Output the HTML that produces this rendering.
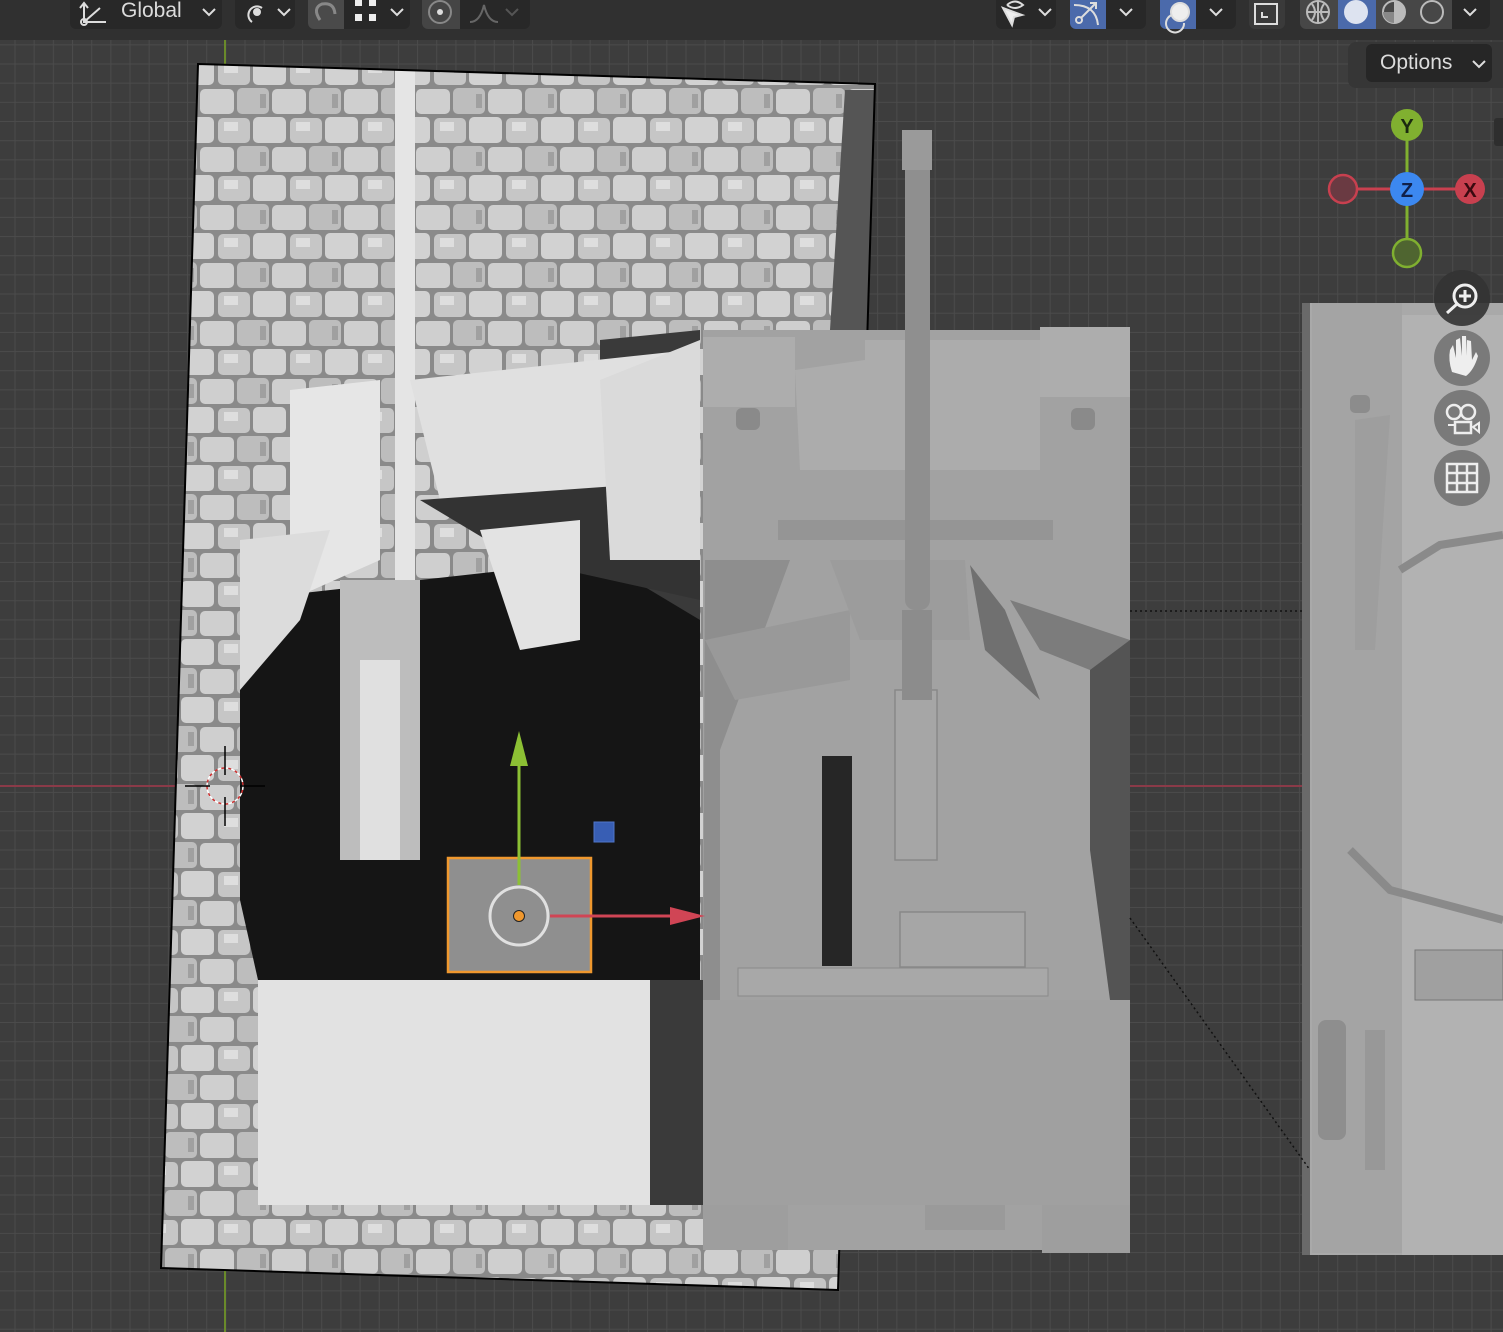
<!DOCTYPE html>
<html><head><meta charset="utf-8"><style>
html,body{margin:0;padding:0;width:1503px;height:1332px;overflow:hidden;background:#3d3d3d;font-family:"Liberation Sans",sans-serif}
.hdr{position:absolute;left:0;top:0;width:1503px;height:40px;background:#303030}
.btn{position:absolute;top:-6px;height:35px;background:#282828;border-radius:0 0 6px 6px}
.t{position:absolute;color:#dcdcdc;font-size:21px}
</style></head><body>
<svg width="1503" height="1332" style="position:absolute;left:0;top:0">
<defs>
<pattern id="g" width="19.17" height="19.17" patternUnits="userSpaceOnUse" x="14.5" y="6">
<rect width="19.17" height="19.17" fill="#3d3d3d"/>
<path d="M0 0H19.17M0 0V19.17" stroke="#4b4b4b" stroke-width="2"/>
</pattern>
<pattern id="cob" width="72" height="58" patternUnits="userSpaceOnUse">
<rect width="72" height="58" fill="#8a8a8a"/>
<rect x="2" y="2" width="32" height="25" rx="5" fill="#c6c6c6"/>
<rect x="37" y="1" width="33" height="26" rx="5" fill="#d2d2d2"/>
<rect x="-16" y="31" width="34" height="25" rx="5" fill="#cfcfcf"/>
<rect x="56" y="31" width="34" height="25" rx="5" fill="#cfcfcf"/>
<rect x="21" y="30" width="32" height="26" rx="5" fill="#bdbdbd"/>
<rect x="8" y="6" width="14" height="9" fill="#dedede"/>
<rect x="44" y="36" width="6" height="14" fill="#a0a0a0"/>
</pattern>
<clipPath id="ph"><polygon points="198,64 875,84 838,1290 161,1268"/></clipPath>
</defs>
<rect width="1503" height="1332" fill="url(#g)"/>
<line x1="0" y1="786" x2="1503" y2="786" stroke="#8a3a48" stroke-width="2"/>
<line x1="225" y1="40" x2="225" y2="1332" stroke="#6a8a2a" stroke-width="2"/>
<!-- photo -->
<g clip-path="url(#ph)">
<rect x="150" y="60" width="740" height="1240" fill="url(#cob)"/>
<polygon points="845,90 880,90 870,330 830,330" fill="#555"/>
<polygon points="600,340 700,330 700,1200 600,1200" fill="#3a3a3a"/>
<polygon points="240,600 600,560 700,620 700,980 258,980 240,900" fill="#151515"/>
<rect x="395" y="70" width="20" height="520" fill="#e5e5e5"/>
<polygon points="290,390 380,380 380,560 290,600" fill="#e6e6e6"/>
<polygon points="410,380 690,350 700,480 440,500" fill="#e0e0e0"/>
<polygon points="420,500 700,480 700,600 520,560" fill="#333"/>
<polygon points="240,540 330,530 300,620 240,690" fill="#dcdcdc"/>
<polygon points="480,530 580,520 580,640 520,650" fill="#e3e3e3"/>
<rect x="340" y="580" width="80" height="280" fill="#bdbdbd"/>
<rect x="360" y="660" width="40" height="200" fill="#e0e0e0"/>
<polygon points="600,380 700,340 700,560 610,560" fill="#dadada"/>
<rect x="258" y="980" width="392" height="225" fill="#e2e2e2"/>
<rect x="650" y="980" width="60" height="225" fill="#3a3a3a"/>
</g>
<polygon points="198,64 875,84 838,1290 161,1268" fill="none" stroke="#000" stroke-width="2"/>
<!-- main model -->
<rect x="703" y="330" width="427" height="920" fill="#a2a2a2"/>
<rect x="703" y="337" width="92" height="70" fill="#adadad"/>
<rect x="1040" y="327" width="90" height="70" fill="#adadad"/>
<polygon points="795,370 865,360 865,340 1040,340 1040,470 800,470" fill="#acacac"/>
<rect x="778" y="520" width="275" height="20" fill="#959595"/>
<polygon points="705,560 790,560 720,750 720,1000 703,1000" fill="#8e8e8e"/>
<polygon points="705,640 850,610 850,680 735,700" fill="#999"/>
<polygon points="1090,640 1130,640 1130,1000 1110,1000 1090,850" fill="#545454"/>
<polygon points="1010,600 1130,640 1090,670 1040,650" fill="#7c7c7c"/>
<polygon points="970,565 1005,610 1040,700 985,650" fill="#707070"/>
<polygon points="830,560 965,560 970,640 860,640" fill="#9c9c9c"/>
<rect x="822" y="756" width="30" height="210" fill="#262626"/>
<rect x="900" y="912" width="125" height="55" fill="#a6a6a6" stroke="#888" stroke-width="1.5"/>
<rect x="895" y="690" width="42" height="170" fill="#a6a6a6" stroke="#888" stroke-width="1.5"/>
<rect x="902" y="610" width="30" height="90" fill="#8c8c8c"/>
<rect x="905" y="130" width="25" height="480" rx="10" fill="#8f8f8f"/>
<rect x="902" y="130" width="30" height="40" fill="#9a9a9a"/>
<rect x="736" y="408" width="24" height="22" rx="6" fill="#8a8a8a"/>
<rect x="1071" y="408" width="24" height="22" rx="6" fill="#8a8a8a"/>
<rect x="738" y="968" width="310" height="28" fill="#a8a8a8" stroke="#8a8a8a"/>
<rect x="703" y="1000" width="427" height="205" fill="#a0a0a0"/>
<rect x="703" y="1205" width="85" height="45" fill="#9e9e9e"/>
<rect x="1042" y="1205" width="88" height="48" fill="#9e9e9e"/>
<rect x="925" y="1205" width="80" height="25" fill="#9a9a9a"/>
<!-- right model -->
<rect x="1302" y="303" width="201" height="952" fill="#a9a9a9"/>
<rect x="1312" y="303" width="90" height="950" fill="#a4a4a4"/>
<rect x="1402" y="315" width="101" height="940" fill="#b2b2b2"/>
<rect x="1302" y="303" width="8" height="952" fill="#6a6a6a"/>
<rect x="1415" y="950" width="88" height="50" fill="#a0a0a0" stroke="#777"/>
<rect x="1350" y="395" width="20" height="18" rx="5" fill="#8c8c8c"/>
<polygon points="1355,420 1390,415 1375,650 1355,650" fill="#9e9e9e"/>
<rect x="1318" y="1020" width="28" height="120" rx="8" fill="#8e8e8e"/>
<rect x="1365" y="1030" width="20" height="140" fill="#989898"/>
<polyline points="1350,850 1390,890 1503,920" fill="none" stroke="#8a8a8a" stroke-width="8"/>
<polyline points="1400,570 1440,545 1503,535" fill="none" stroke="#8a8a8a" stroke-width="8"/>
<!-- dotted -->
<line x1="1130" y1="611" x2="1305" y2="611" stroke="#111" stroke-width="1.5" stroke-dasharray="2,3"/>
<line x1="1130" y1="918" x2="1310" y2="1170" stroke="#111" stroke-width="1.5" stroke-dasharray="2,3"/>
<!-- cursor -->
<circle cx="225" cy="786" r="18" fill="none" stroke="#fff" stroke-width="1.5" stroke-dasharray="4,3"/>
<circle cx="225" cy="786" r="18" fill="none" stroke="#d03030" stroke-width="1.5" stroke-dasharray="3,4" stroke-dashoffset="3"/>
<path d="M185 786H210M240 786H265M225 746V775M225 797V826" stroke="#000" stroke-width="1.5"/>
<!-- object + gizmo -->
<rect x="448" y="858" width="143" height="114" fill="#8f8f8f" stroke="#f0982e" stroke-width="2.5"/>
<line x1="519" y1="885" x2="519" y2="765" stroke="#8cc034" stroke-width="3"/>
<polygon points="519,731 510,766 528,766" fill="#8cc034"/>
<line x1="550" y1="916" x2="672" y2="916" stroke="#d04555" stroke-width="3"/>
<polygon points="705,916 670,907 670,925" fill="#d04555"/>
<circle cx="519" cy="916" r="29" fill="none" stroke="#e0e0e0" stroke-width="3"/>
<circle cx="519" cy="916" r="5.5" fill="#f0982e" stroke="#222" stroke-width="1"/>
<rect x="594" y="822" width="20" height="20" fill="#3f6bd0" opacity="0.85" stroke="#5a86e8"/>
<!-- nav gizmo -->
<line x1="1343" y1="189" x2="1470" y2="189" stroke="#c8404f" stroke-width="3"/>
<line x1="1407" y1="125" x2="1407" y2="253" stroke="#80b030" stroke-width="3"/>
<circle cx="1343" cy="189" r="14" fill="#6a3a42" stroke="#c8404f" stroke-width="2.5"/>
<circle cx="1407" cy="253" r="14" fill="#4f6530" stroke="#80b030" stroke-width="2.5"/>
<circle cx="1407" cy="125" r="16" fill="#80b030"/>
<circle cx="1470" cy="189" r="15" fill="#c8404f"/>
<circle cx="1407" cy="189" r="17" fill="#3c88f0"/>
<text x="1407" y="133" font-family="Liberation Sans" font-weight="bold" font-size="20" fill="#1b2a10" text-anchor="middle">Y</text>
<text x="1407" y="197" font-family="Liberation Sans" font-weight="bold" font-size="20" fill="#10204a" text-anchor="middle">Z</text>
<text x="1470" y="197" font-family="Liberation Sans" font-weight="bold" font-size="20" fill="#3a0a10" text-anchor="middle">X</text>
<circle cx="1462" cy="298" r="28" fill="#333" opacity="0.9"/>
<circle cx="1462" cy="358" r="28" fill="#7a7a7a"/>
<circle cx="1462" cy="418" r="28" fill="#7a7a7a"/>
<circle cx="1462" cy="478" r="28" fill="#7a7a7a"/>
<circle cx="1465" cy="296" r="11" fill="none" stroke="#eee" stroke-width="3"/>
<path d="M1465 290V302M1459 296H1471M1457 304L1447 313" stroke="#eee" stroke-width="3"/>
<path d="M1452 372Q1448 360 1450 350L1453 345L1456 358V340L1460 338L1462 356V336L1466 336L1467 356V340L1471 341L1472 360L1476 352L1478 356Q1474 370 1466 376Z" fill="#eee"/>
<circle cx="1454" cy="412" r="7" fill="none" stroke="#eee" stroke-width="2.5"/><circle cx="1468" cy="412" r="7" fill="none" stroke="#eee" stroke-width="2.5"/>
<rect x="1455" y="422" width="16" height="11" fill="none" stroke="#eee" stroke-width="2.5"/><path d="M1473 427L1479 423V432Z M1448 425H1455" stroke="#eee" stroke-width="2" fill="none"/>
<path d="M1447 464H1477V492H1447ZM1457 464V492M1467 464V492M1447 473H1477M1447 483H1477" stroke="#eee" stroke-width="2.5" fill="none"/>
<rect x="1494" y="118" width="12" height="28" rx="3" fill="#2e2e2e"/>
</svg>
<div class="hdr"></div>
<div class="btn" style="left:70px;width:152px"></div>
<div class="btn" style="left:235px;width:60px"></div>
<div class="btn" style="left:308px;width:102px"><div style="width:36px;height:35px;background:#4a4a4a;border-radius:0 0 0 6px"></div></div>
<div class="btn" style="left:422px;width:108px"><div style="width:38px;height:35px;background:#454545;border-radius:0 0 0 6px"></div></div>
<div class="t" style="left:121px;top:-1px">Global</div>
<svg width="1503" height="40" style="position:absolute;left:0;top:0">
<g stroke="#ddd" stroke-width="2" fill="none">
<path d="M84 3V22H106M84 22L100 8M88 8L84 3L80 8"/><circle cx="84" cy="22" r="3"/>
<path d="M203 9L209 15L215 9M278 9L284 15L290 9M391 9L397 15L403 9"/>
<path d="M252 22a8 8 0 1 1 10 -14" /><circle cx="257" cy="12" r="3" fill="#ddd"/>
<path d="M320 20Q312 8 322 4Q334 2 335 14" stroke="#888" stroke-width="3"/>
<circle cx="440" cy="12" r="11" stroke="#888"/><circle cx="440" cy="12" r="3" fill="#ddd" stroke="none"/>
<path d="M470 22Q480 22 484 5Q488 22 498 22" stroke="#666"/><path d="M506 9L512 15L518 9" stroke="#555"/>
</g>
<g fill="#eee"><rect x="355" y="0" width="7" height="6"/><rect x="369" y="0" width="7" height="6"/><rect x="355" y="14" width="7" height="7"/><rect x="369" y="14" width="7" height="7"/></g>
</svg>
<div class="btn" style="left:996px;width:60px"></div>
<div class="btn" style="left:1070px;width:76px"><div style="width:36px;height:35px;background:#4b6aab;border-radius:0 0 0 6px"></div></div>
<div class="btn" style="left:1160px;width:76px"><div style="width:36px;height:35px;background:#4b6aab;border-radius:0 0 0 6px"></div></div>
<div class="btn" style="left:1249px;width:36px;background:#3a3a3a"></div>
<div class="btn" style="left:1300px;width:190px;background:#282828">
<div style="position:absolute;left:0;width:38px;height:35px;background:#474747;border-radius:0 0 0 6px"></div>
<div style="position:absolute;left:38px;width:38px;height:35px;background:#4b6aab"></div>
<div style="position:absolute;left:76px;width:76px;height:35px;background:#474747"></div>
</div>
<svg width="1503" height="40" style="position:absolute;left:0;top:0">
<g stroke="#ddd" stroke-width="2" fill="none">
<path d="M1039 9L1045 15L1051 9M1120 9L1126 15L1132 9M1210 9L1216 15L1222 9M1464 9L1470 15L1476 9"/>
<path d="M1003 8L1012 25L1014 17L1022 15Z" fill="#eee"/><path d="M1007 5Q1015 -2 1023 5Q1015 11 1007 5"/>
<circle cx="1079" cy="20" r="3"/><path d="M1081 18L1096 3M1090 3H1096V9M1074 5Q1096 5 1098 25"/>
<circle cx="1180" cy="12" r="9" fill="#eee"/><path d="M1172 15a9 9 0 1 0 12 8"/>
<path d="M1255 4H1277V24H1255ZM1262 12V17H1268"/>
<circle cx="1318" cy="12" r="11" stroke="#bbb"/><path d="M1307 12H1329M1318 1V23M1312 4Q1318 12 1312 20M1324 4Q1318 12 1324 20" stroke="#bbb"/>
<circle cx="1394" cy="12" r="11" stroke="#bbb"/><circle cx="1432" cy="12" r="11" stroke="#bbb"/>
</g>
<circle cx="1356" cy="12" r="12" fill="#dde3f0"/>
<path d="M1394 1A11 11 0 0 1 1394 23Z" fill="#bbb"/><path d="M1383 12A11 11 0 0 0 1394 23V12Z" fill="#888"/>
</svg>
<div style="position:absolute;left:1348px;top:42px;width:160px;height:46px;background:#363636;border-radius:8px 0 0 8px"></div>
<div style="position:absolute;left:1366px;top:44px;width:126px;height:38px;background:#262626;border-radius:6px"></div>
<div class="t" style="left:1380px;top:51px">Options</div>
<svg width="20" height="20" style="position:absolute;left:1470px;top:55px"><path d="M3 6L9 12L15 6" stroke="#ddd" stroke-width="2" fill="none"/></svg>
</body></html>
